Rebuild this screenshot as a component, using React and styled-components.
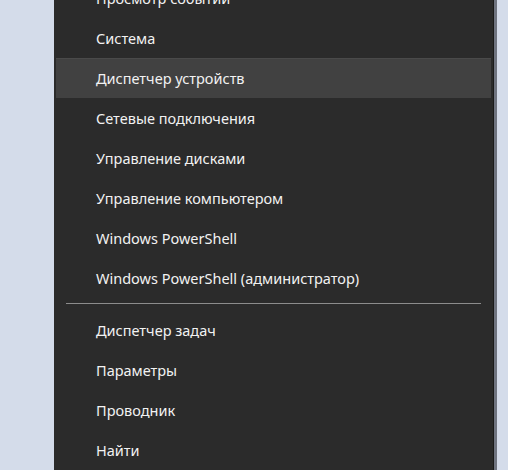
import styled, { createGlobalStyle } from 'styled-components'

const Global = createGlobalStyle`
  html, body { margin: 0; padding: 0; background: #d4dcea; }
  body { font-family: "Noto Sans", "Open Sans", sans-serif; overflow: hidden; }
`

const upper = [
    'Просмотр событий',
    'Система',
    'Диспетчер устройств',
    'Сетевые подключения',
    'Управление дисками',
    'Управление компьютером',
    'Windows PowerShell',
    'Windows PowerShell (администратор)',
]
const lower = ['Диспетчер задач', 'Параметры', 'Проводник', 'Найти']

const Screen = styled.div`height: 470px; overflow: hidden; display: flex; background: #d4dcea;`
const Menu = styled.div`
  margin-left: 54px; width: 440px; margin-top: -22px; height: 520px;
  background: #2b2b2b; border-right: 1px solid #1b1b1b; box-shadow: 3px 0 0 #6f7480;
  display: flex; flex-direction: column; padding: 0 2px 0 2px; box-sizing: border-box;
`
const Item = styled.div`
  height: 40px; flex-shrink: 0; display: flex; align-items: center; padding-left: 40px;
  font-size: 14.5px; color: #f2f2f2;
  background: ${({ $hover }) => $hover ? '#414141' : 'transparent'};
  box-shadow: ${({ $hover }) => $hover ? 'inset 0 1px 0 #4a4a4a' : 'none'};
`
const Sep = styled.div`height: 12px; flex-shrink: 0; display: flex; align-items: flex-start; padding: 5px 10px 0; box-sizing: border-box; &::after { content: ''; flex: 1; height: 1px; background: #8c8c8c; }`

export default function App() {
    return (
        <Screen>
            <Global />
            <Menu>
                {upper.map((t, i) => <Item key={t} $hover={i === 2}>{t}</Item>)}
                <Sep />
                {lower.map(t => <Item key={t}>{t}</Item>)}
            </Menu>
        </Screen>
    )
}
